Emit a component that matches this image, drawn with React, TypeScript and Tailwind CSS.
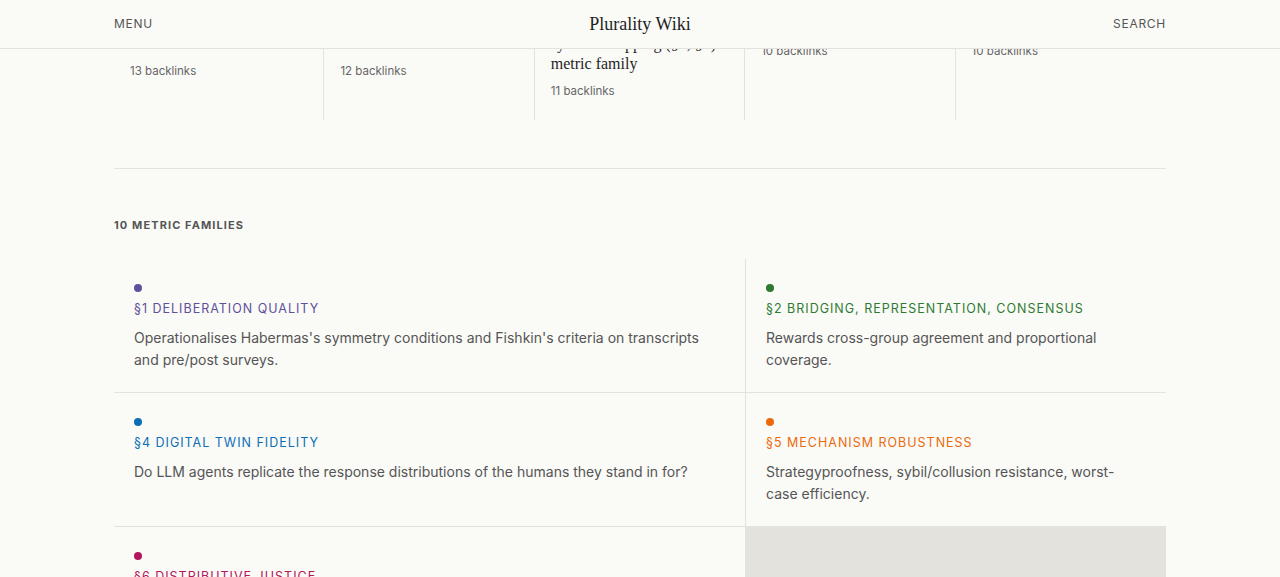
import React from "react";

const sans = "font-['Inter','Noto_Sans',sans-serif]";
const serif = "font-['Liberation_Serif','Times_New_Roman',serif]";

type Hub = { title: string; links: number };

const hubs: Hub[] = [
  { title: "Habermas's symmetry conditions", links: 13 },
  { title: "Fishkin's deliberative criteria", links: 12 },
  { title: "Collective response systems mapping (§2, §3) metric family", links: 11 },
  { title: "Polis", links: 10 },
  { title: "Quadratic voting", links: 10 },
];

type Family = {
  code: string;
  name: string;
  desc: string;
  dot: string;
  text: string;
};

const families: Family[] = [
  {
    code: "§1",
    name: "Deliberation Quality",
    desc: "Operationalises Habermas's symmetry conditions and Fishkin's criteria on transcripts and pre/post surveys.",
    dot: "bg-[#5f4f9c]",
    text: "text-[#5f4f9c]",
  },
  {
    code: "§2",
    name: "Bridging, Representation, Consensus",
    desc: "Rewards cross-group agreement and proportional coverage.",
    dot: "bg-[#2e7a32]",
    text: "text-[#2e7a32]",
  },
  {
    code: "§4",
    name: "Digital Twin Fidelity",
    desc: "Do LLM agents replicate the response distributions of the humans they stand in for?",
    dot: "bg-[#0b6fb5]",
    text: "text-[#0b6fb5]",
  },
  {
    code: "§5",
    name: "Mechanism Robustness",
    desc: "Strategyproofness, sybil/collusion resistance, worst-case efficiency.",
    dot: "bg-[#ec6a0c]",
    text: "text-[#ec6a0c]",
  },
  {
    code: "§6",
    name: "Distributive Justice",
    desc: "Who gains and who loses when preferences are aggregated?",
    dot: "bg-[#b0185a]",
    text: "text-[#b0185a]",
  },
];

function Header() {
  return (
    <header className="fixed inset-x-0 top-0 z-10 h-[49px] border-b border-[#e4e2dd] bg-[#fafaf7]">
      <div className="mx-auto grid h-full w-[1052px] grid-cols-3 items-center">
        <button className={`${sans} justify-self-start text-[12px] tracking-[0.06em] text-[#555]`}>MENU</button>
        <span className={`${serif} justify-self-center text-[18px] text-[#1f1f1f]`}>Plurality Wiki</span>
        <button className={`${sans} justify-self-end text-[12px] tracking-[0.06em] text-[#555]`}>SEARCH</button>
      </div>
    </header>
  );
}

function HubCard({ hub, last }: { hub: Hub; last: boolean }) {
  return (
    <div className={`px-4 pt-[14px] pb-[21px] ${last ? "" : "border-r border-[#e4e2dd]"}`}>
      <div className={`${serif} text-[16px] leading-[20px] text-[#1f1f1f]`}>{hub.title}</div>
      <div className={`${sans} mt-[9px] text-[11.5px] leading-[16px] text-[#666]`}>{hub.links} backlinks</div>
    </div>
  );
}

function FamilyCell({ f }: { f: Family }) {
  return (
    <div className="bg-[#fafaf7] pt-[25px] pr-7 pb-[22px] pl-5">
      <div className={`h-2 w-2 rounded-full ${f.dot}`} />
      <div className={`${sans} mt-[7px] text-[12.5px] leading-[20px] tracking-[0.08em] uppercase ${f.text}`}>
        {f.code} {f.name}
      </div>
      <p className={`${sans} mt-[8px] text-[14px] leading-[21.5px] text-[#555]`}>{f.desc}</p>
    </div>
  );
}

export default function App() {
  return (
    <div className="min-h-[577px] bg-[#fafaf7]">
      <Header />
      <main className="mx-auto w-[1052px]">
        <section className="grid grid-cols-5 border-b border-[#e4e2dd] pb-12">
          {hubs.map((h, i) => (
            <HubCard key={h.title} hub={h} last={i === hubs.length - 1} />
          ))}
        </section>
        <h2 className={`${sans} mt-[49px] text-[11px] font-bold leading-[14px] tracking-[0.1em] text-[#555]`}>
          10 METRIC FAMILIES
        </h2>
        <section className="mt-[27px] grid grid-cols-[631px_1fr] gap-px bg-[#e4e2dd]">
          {families.map((f) => (
            <FamilyCell key={f.code} f={f} />
          ))}
        </section>
      </main>
    </div>
  );
}
